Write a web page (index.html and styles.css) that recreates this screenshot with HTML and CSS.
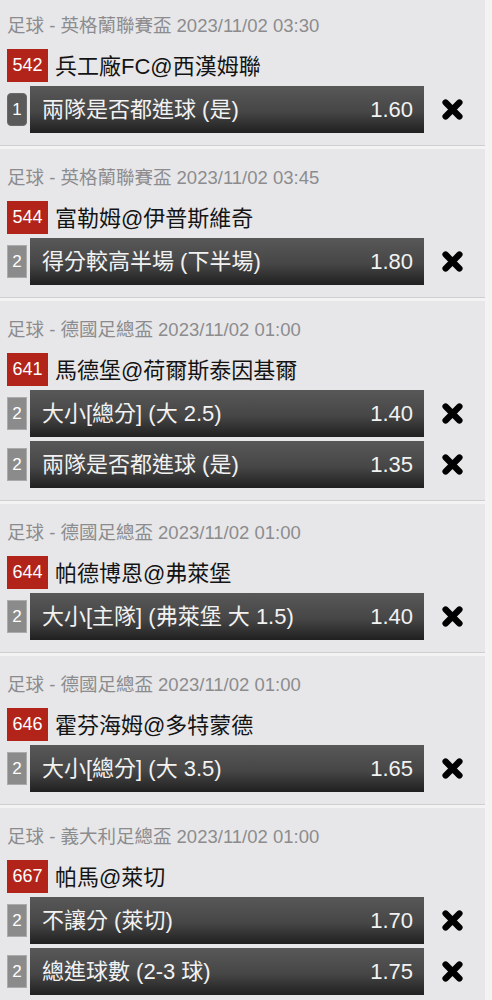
FILE: index.html
```html
<!DOCTYPE html>
<html lang="zh-Hant">
  <head>
    <meta charset="UTF-8" />
    <meta name="viewport" content="width=device-width, initial-scale=1.0" />
    <title>注單</title>
    <link rel="stylesheet" href="styles.css">
  </head>

  <body>
    <div class="slip">
      <div class="match">
        <div class="league">足球 - 英格蘭聯賽盃 2023/11/02 03:30</div>
        <div class="teams"><span class="num">542</span><span class="name">兵工廠FC@西漢姆聯</span></div>
        <div class="bet">
          <span class="leg dark">1</span>
          <div class="bar"><span class="pick">兩隊是否都進球 (是)</span><span>1.60</span></div>
          <span class="close"><svg viewBox="0 0 20 20" width="23" height="23"><path d="M4 4L16 16M16 4L4 16" /></svg></span>
        </div>
      </div>

      <div class="match">
        <div class="league">足球 - 英格蘭聯賽盃 2023/11/02 03:45</div>
        <div class="teams"><span class="num">544</span><span class="name">富勒姆@伊普斯維奇</span></div>
        <div class="bet">
          <span class="leg">2</span>
          <div class="bar"><span class="pick">得分較高半場 (下半場)</span><span>1.80</span></div>
          <span class="close"><svg viewBox="0 0 20 20" width="23" height="23"><path d="M4 4L16 16M16 4L4 16" /></svg></span>
        </div>
      </div>

      <div class="match">
        <div class="league">足球 - 德國足總盃 2023/11/02 01:00</div>
        <div class="teams"><span class="num">641</span><span class="name">馬德堡@荷爾斯泰因基爾</span></div>
        <div class="bet">
          <span class="leg">2</span>
          <div class="bar"><span class="pick">大小[總分] (大 2.5)</span><span>1.40</span></div>
          <span class="close"><svg viewBox="0 0 20 20" width="23" height="23"><path d="M4 4L16 16M16 4L4 16" /></svg></span>
        </div>
        <div class="bet">
          <span class="leg">2</span>
          <div class="bar"><span class="pick">兩隊是否都進球 (是)</span><span>1.35</span></div>
          <span class="close"><svg viewBox="0 0 20 20" width="23" height="23"><path d="M4 4L16 16M16 4L4 16" /></svg></span>
        </div>
      </div>

      <div class="match">
        <div class="league">足球 - 德國足總盃 2023/11/02 01:00</div>
        <div class="teams"><span class="num">644</span><span class="name">帕德博恩@弗萊堡</span></div>
        <div class="bet">
          <span class="leg">2</span>
          <div class="bar"><span class="pick">大小[主隊] (弗萊堡 大 1.5)</span><span>1.40</span></div>
          <span class="close"><svg viewBox="0 0 20 20" width="23" height="23"><path d="M4 4L16 16M16 4L4 16" /></svg></span>
        </div>
      </div>

      <div class="match">
        <div class="league">足球 - 德國足總盃 2023/11/02 01:00</div>
        <div class="teams"><span class="num">646</span><span class="name">霍芬海姆@多特蒙德</span></div>
        <div class="bet">
          <span class="leg">2</span>
          <div class="bar"><span class="pick">大小[總分] (大 3.5)</span><span>1.65</span></div>
          <span class="close"><svg viewBox="0 0 20 20" width="23" height="23"><path d="M4 4L16 16M16 4L4 16" /></svg></span>
        </div>
      </div>

      <div class="match">
        <div class="league">足球 - 義大利足總盃 2023/11/02 01:00</div>
        <div class="teams"><span class="num">667</span><span class="name">帕馬@萊切</span></div>
        <div class="bet">
          <span class="leg">2</span>
          <div class="bar"><span class="pick">不讓分 (萊切)</span><span>1.70</span></div>
          <span class="close"><svg viewBox="0 0 20 20" width="23" height="23"><path d="M4 4L16 16M16 4L4 16" /></svg></span>
        </div>
        <div class="bet">
          <span class="leg">2</span>
          <div class="bar"><span class="pick">總進球數 (2-3 球)</span><span>1.75</span></div>
          <span class="close"><svg viewBox="0 0 20 20" width="23" height="23"><path d="M4 4L16 16M16 4L4 16" /></svg></span>
        </div>
      </div>
    </div>
  </body>
</html>
```

FILE: styles.css
```css
body {
  margin: 0;
  background-color: #f3f3f4;
  font-family: "Liberation Sans", "Noto Sans CJK TC", sans-serif;
}

.slip {
  width: 485px;
}

.match {
  background-color: #e7e7e9;
  padding: 17px 0 12px 0;
  border-bottom: 1px solid #cfcfd1;
  margin-bottom: 3px;
}

.match:first-child {
  padding-top: 14px;
}

.league {
  height: 24px;
  line-height: 24px;
  padding-left: 7px;
  font-size: 18.5px;
  color: #8c8c8e;
  white-space: nowrap;
}

.teams {
  display: flex;
  align-items: center;
  height: 33px;
  margin-top: 11px;
  padding-left: 7px;
  font-size: 22px;
  color: #141414;
  white-space: nowrap;
}

.name {
  margin-bottom: 4px;
}

.num {
  width: 41px;
  height: 33px;
  margin-right: 7px;
  display: flex;
  align-items: center;
  justify-content: center;
  background-color: #b2241a;
  color: #fff;
  font-size: 18px;
}

.bet {
  display: flex;
  align-items: center;
  height: 47px;
  margin-top: 4px;
  padding-left: 7px;
}

.leg {
  box-sizing: border-box;
  width: 20px;
  height: 33px;
  margin-right: 3px;
  display: flex;
  align-items: center;
  justify-content: center;
  background-color: #8b8b8b;
  border: 1px solid #ababab;
  color: #fff;
  font-size: 17px;
}

.leg.dark {
  background-color: #5a5a5a;
  border-color: #6a6a6a;
  border-radius: 4px;
}

.bar {
  box-sizing: border-box;
  width: 394px;
  height: 47px;
  padding: 0 11px 0 12px;
  display: flex;
  align-items: center;
  justify-content: space-between;
  background: linear-gradient(#585858, #464646 55%, #202020);
  color: #f2f2f2;
  font-size: 22px;
  white-space: nowrap;
}

.pick {
  margin-bottom: 5px;
}

.close {
  width: 56px;
  display: flex;
  justify-content: center;
}

.close path {
  stroke: #000;
  stroke-width: 5.5;
  stroke-linecap: round;
  fill: none;
}
```
